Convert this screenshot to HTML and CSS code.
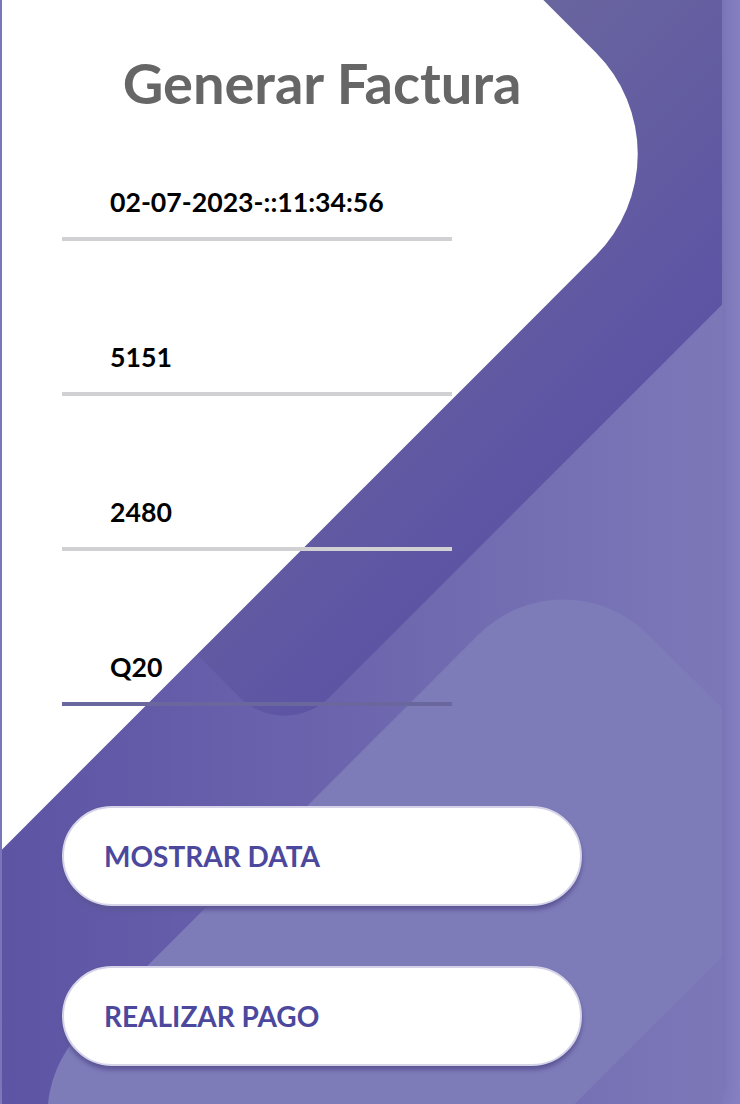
FILE: index.html
```html
<!DOCTYPE html>
<html lang="es">
<head>
<meta charset="utf-8">
<title>Generar Factura</title>
<link rel="stylesheet" href="styles.css">
</head>
<body>
<div class="screen">
  <div class="screen__background">
    <span class="shape shape4"></span>
    <span class="shape shape3"></span>
    <span class="shape shape2"></span>
    <span class="shape shape1"></span>
  </div>
  <div class="screen__content">
    <form class="login">
      <h1 class="title">Generar Factura</h1>
      <div class="field"><input class="input" type="text" value="02-07-2023-::11:34:56"></div>
      <div class="field"><input class="input" type="text" value="5151"></div>
      <div class="field"><input class="input" type="text" value="2480"></div>
      <div class="field"><input class="input input--active" type="text" value="Q20"></div>
      <button class="submit" type="button">Mostrar Data</button>
      <button class="submit" type="button">Realizar Pago</button>
    </form>
  </div>
</div>
</body>
</html>
```
FILE: styles.css
```css
* {
  box-sizing: border-box;
  margin: 0;
  padding: 0;
  font-family: "Lato", "Open Sans", sans-serif;
}

html, body {
  height: 100%;
  overflow: hidden;
}

body {
  background: #8682c4;
  display: flow-root;
}

.screen {
  position: relative;
  width: 720px;
  height: 1370px;
  margin: -266px 0 0 2px;
  background: linear-gradient(90deg, #5d54a4, #7c78b8);
  box-shadow: 0 0 24px rgba(92, 86, 150, 0.6);
}

.screen__background {
  position: absolute;
  top: 0;
  left: 0;
  right: 0;
  bottom: 0;
  z-index: 0;
  overflow: hidden;
}

.shape {
  position: absolute;
  transform: rotate(45deg);
}

.shape1 {
  width: 1040px;
  height: 1040px;
  background: #fff;
  top: -100px;
  right: 240px;
  border-radius: 0 144px 0 0;
}

.shape2 {
  width: 440px;
  height: 440px;
  background: #6c63ac;
  top: -344px;
  right: 0;
  border-radius: 64px;
}

.shape3 {
  width: 380px;
  height: 1080px;
  background: linear-gradient(270deg, #5d54a4, #6a679e);
  top: -48px;
  right: 0;
  border-radius: 64px;
}

.shape4 {
  width: 400px;
  height: 800px;
  background: #7e7bb9;
  top: 840px;
  right: 100px;
  border-radius: 120px;
}

.screen__content {
  position: relative;
  z-index: 1;
}

.login {
  width: 640px;
  padding: 316px 60px 0;
  display: flex;
  flex-direction: column;
}

.title {
  font-size: 56px;
  line-height: 66px;
  font-weight: 700;
  color: #666666;
  text-align: center;
  margin-bottom: 10px;
}

.field {
  padding: 40px 0;
}

.input {
  display: block;
  width: 390px;
  height: 75px;
  padding: 20px 20px 20px 48px;
  border: none;
  border-bottom: 4px solid #d1d1d4;
  background: none;
  font-size: 26.67px;
  line-height: 31px;
  font-weight: 700;
  color: #000;
  outline: none;
}

.input--active {
  border-bottom-color: #6a679e;
}

.submit {
  display: flex;
  align-items: center;
  width: 520px;
  height: 100px;
  margin-top: 60px;
  padding: 32px 40px;
  border: 2px solid #d4d3e8;
  border-radius: 52px;
  background: #fff;
  box-shadow: 0 4px 4px #5c5696;
  font-size: 28px;
  line-height: 32px;
  font-weight: 700;
  color: #4c489d;
  text-transform: uppercase;
  text-align: left;
}
```
